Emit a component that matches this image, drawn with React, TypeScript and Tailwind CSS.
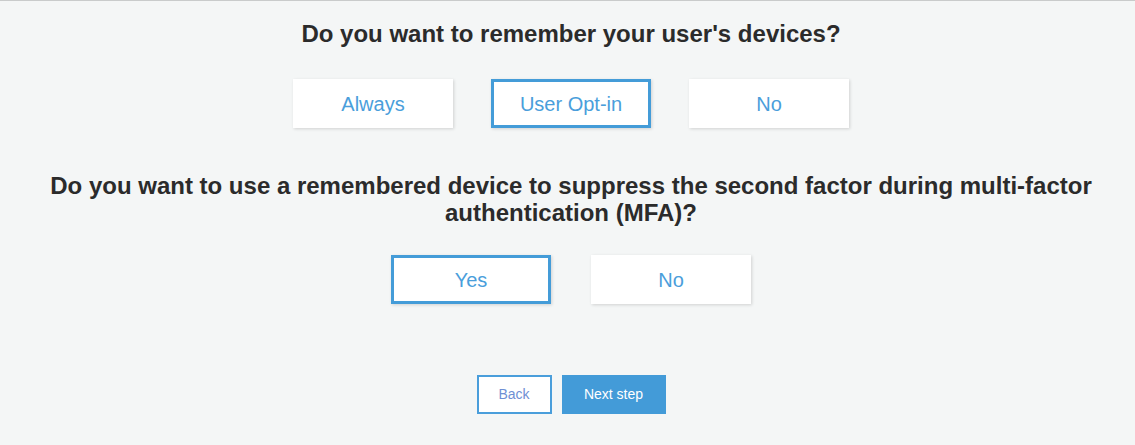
import React from "react";

const Choice = ({ label, selected }: { label: string; selected?: boolean }) => (
  <div
    className={
      "w-[160px] h-[49px] bg-white flex items-center justify-center text-[20px] text-[#4a9edb] shadow-[1px_1px_3px_rgba(0,0,0,0.15)] " +
      (selected ? "border-[3px] border-[#449cd8]" : "")
    }
  >
    {label}
  </div>
);

export default function App() {
  return (
    <div
      className="w-[1135px] h-[445px] bg-[#f4f6f6] border-t border-[#c9cbcb] flex flex-col items-center pl-[7px]"
      style={{ fontFamily: '"Liberation Sans", Arial, sans-serif' }}
    >
      <h1 className="mt-[19px] text-[24px] leading-[28px] font-bold text-[#2b2b2b] whitespace-nowrap">
        Do you want to remember your user's devices?
      </h1>
      <div className="mt-[31px] flex gap-[38px]">
        <Choice label="Always" />
        <Choice label="User Opt-in" selected />
        <Choice label="No" />
      </div>
      <h2 className="mt-[44px] text-[24px] leading-[27px] font-bold text-[#2b2b2b] text-center whitespace-nowrap">
        Do you want to use a remembered device to suppress the second factor during multi-factor
        <br />
        authentication (MFA)?
      </h2>
      <div className="mt-[29px] flex gap-[40px]">
        <Choice label="Yes" selected />
        <Choice label="No" />
      </div>
      <div className="mt-[71px] flex gap-[10px]">
        <button className="w-[75px] h-[39px] bg-white border-2 border-[#4a9edb] text-[14px] text-[#6f8fd4]">
          Back
        </button>
        <button className="w-[104px] h-[39px] bg-[#439bd8] text-[14px] text-white">
          Next step
        </button>
      </div>
    </div>
  );
}
